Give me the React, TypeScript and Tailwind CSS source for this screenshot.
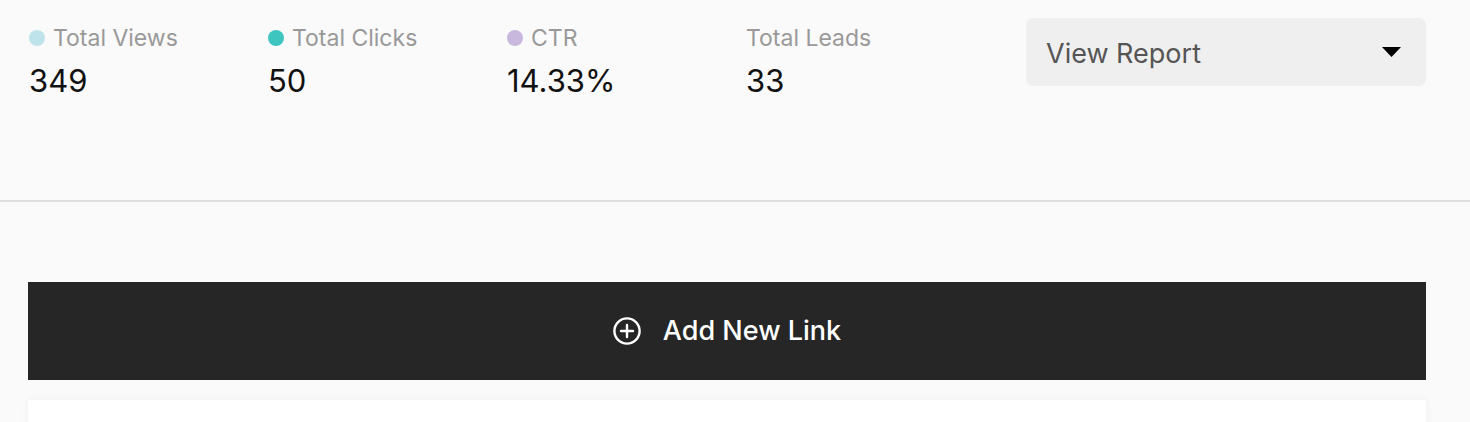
import React from 'react';

interface Stat {
  label: string;
  value: string;
  dot?: string;
}

const stats: Stat[] = [
  { label: 'Total Views', value: '349', dot: 'bg-[#bee3ea]' },
  { label: 'Total Clicks', value: '50', dot: 'bg-[#3ec5bf]' },
  { label: 'CTR', value: '14.33%', dot: 'bg-[#c8b8dd]' },
  { label: 'Total Leads', value: '33' },
];

function StatItem({ stat }: { stat: Stat }) {
  return (
    <div className="w-[239px] shrink-0">
      <div className="flex items-center gap-[8px] h-[28px]">
        {stat.dot && <span className={`w-[16px] h-[16px] shrink-0 rounded-full ${stat.dot}`} />}
        <span className="text-[23px] leading-none text-[#999999]">{stat.label}</span>
      </div>
      <div className="mt-[13px] text-[31px] leading-none text-[#111111]">{stat.value}</div>
    </div>
  );
}

function PlusCircle() {
  return (
    <svg width="28" height="28" viewBox="0 0 28 28" fill="none" stroke="white" strokeWidth="2.4" strokeLinecap="round">
      <circle cx="14" cy="14" r="12.6" />
      <path d="M14 8v12M8 14h12" />
    </svg>
  );
}

export default function App() {
  return (
    <div
      className="min-h-[422px] bg-[#fafafa] overflow-hidden"
      style={{ fontFamily: 'Inter, "Liberation Sans", sans-serif' }}
    >
      <div className="h-[202px] border-b-2 border-[#dedede]">
        <div className="flex pl-[29px] pr-[44px] pt-[18px]">
          <div className="flex pt-[6px]">
            {stats.map((s) => (
              <StatItem key={s.label} stat={s} />
            ))}
          </div>
          <button className="ml-auto w-[400px] h-[68px] rounded-[7px] bg-[#efefef] flex items-center justify-between pl-[20px] pr-[25px]">
            <span className="pt-[5px] text-[27px] text-[#555555]">View Report</span>
            <svg width="19" height="10" viewBox="0 0 19 10">
              <path d="M0 0h19L9.5 10z" fill="black" />
            </svg>
          </button>
        </div>
      </div>

      <div className="pl-[28px] pr-[44px] pt-[80px]">
        <button className="w-full h-[98px] bg-[#262626] flex items-center justify-center gap-[22px] text-white">
          <PlusCircle />
          <span className="text-[27px] font-medium">Add New Link</span>
        </button>
        <div className="mt-[20px] h-[60px] bg-white shadow-[0_0_8px_rgba(0,0,0,0.05)]" />
      </div>
    </div>
  );
}
